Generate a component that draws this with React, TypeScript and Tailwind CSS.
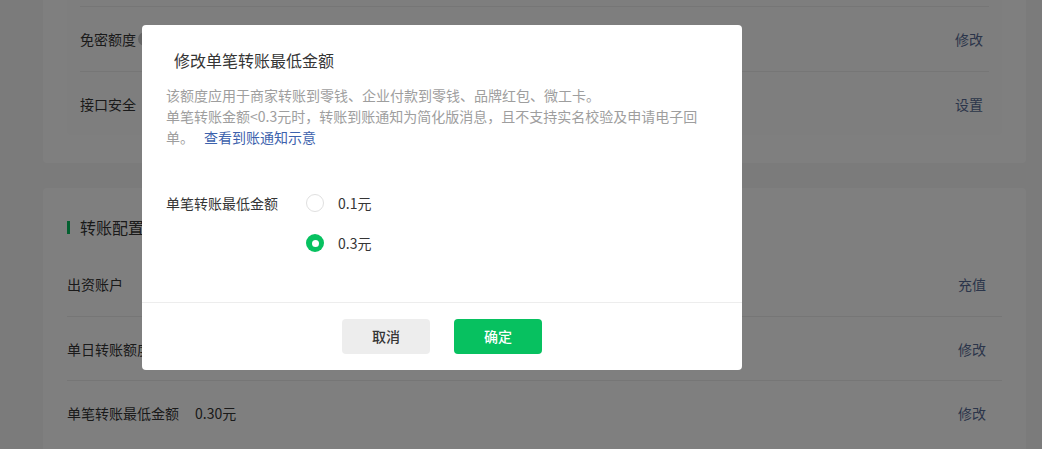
import React from 'react';

const font = { fontFamily: '"Noto Sans CJK SC", "Noto Sans", sans-serif' };

function Row({
  label,
  value,
  action,
  first,
  actionClass = 'mr-4',
}: {
  label: React.ReactNode;
  value?: string;
  action: string;
  first?: boolean;
  actionClass?: string;
}) {
  return (
    <div className={`flex items-center h-16 ${first ? '' : 'border-t border-[#ececec]'}`}>
      <div className="flex items-center text-[14px] leading-5 text-[#353535]">
        {label}
        {value && <span className="ml-[16px]">{value}</span>}
      </div>
      <span className={`ml-auto text-[14px] leading-5 text-[#576b95] ${actionClass}`}>{action}</span>
    </div>
  );
}

export default function App() {
  const [amount, setAmount] = React.useState<'0.1' | '0.3'>('0.3');

  return (
    <div className="relative h-[449px] w-[1042px] overflow-hidden bg-[#f7f7f7]" style={font}>
      {/* page behind the dialog */}
      <div className="px-[43px] pr-[16px]">
        <div className="-mt-[30px] rounded bg-white px-6 pt-6 pb-[28px]">
          <div className="rounded bg-[#fcfcfc] px-[13px] pt-3">
            <div className="h-0 border-t border-[#ececec]" />
            <Row
              first
              actionClass="mr-[6px]"
              label={
                <>
                  免密额度
                  <span className="ml-[2px] inline-flex h-[14px] w-[14px] items-center justify-center rounded-full bg-[#c8c8c8] text-[10px] text-white">
                    ?
                  </span>
                </>
              }
              action="修改"
            />
            <Row label="接口安全" action="设置" actionClass="mr-[6px]" />
          </div>
        </div>

        <div className="mt-[25px] rounded bg-white px-6 pt-6 pb-6">
          <div className="flex h-[30px] items-center mb-[10px]">
            <span className="h-[13px] w-[3px] bg-[#07c160]" />
            <span className="ml-[10px] text-[16px] leading-6 text-[#353535]">转账配置</span>
          </div>
          <Row first label="出资账户" action="充值" />
          <Row label="单日转账额度" action="修改" />
          <Row label="单笔转账最低金额" value="0.30元" action="修改" />
        </div>
      </div>

      {/* mask */}
      <div className="absolute inset-0 bg-black/50" />

      {/* dialog */}
      <div className="absolute left-[142px] top-[25px] w-[600px] rounded bg-white">
        <div className="pl-6 pr-10 pt-[23px]">
          <h3 className="pl-2 text-[16px] font-normal leading-6 text-[#353535]">修改单笔转账最低金额</h3>
          <p className="mt-[13px] text-[14px] leading-[21px] text-[#9e9e9e]">
            该额度应用于商家转账到零钱、企业付款到零钱、品牌红包、微工卡。
            <br />
            单笔转账金额&lt;0.3元时，转账到账通知为简化版消息，且不支持实名校验及申请电子回单。
            <a className="ml-[10px] text-[#3d62ad]" href="#">
              查看到账通知示意
            </a>
          </p>

          <div className="mt-[45px] flex pb-[49px]">
            <div className="w-[140px] text-[14px] leading-5 text-[#353535]">单笔转账最低金额</div>
            <div className="flex flex-col gap-5">
              {(['0.1', '0.3'] as const).map((v) => (
                <label key={v} className="flex h-5 cursor-pointer items-center" onClick={() => setAmount(v)}>
                  {amount === v ? (
                    <span className="flex h-[18px] w-[18px] items-center justify-center rounded-full bg-[#07c160]">
                      <span className="h-[7px] w-[7px] rounded-full bg-white" />
                    </span>
                  ) : (
                    <span className="h-[18px] w-[18px] rounded-full border border-[#e0e0e0] bg-white" />
                  )}
                  <span className="ml-[14px] text-[14px] leading-5 text-[#353535]">{v}元</span>
                </label>
              ))}
            </div>
          </div>
        </div>

        <div className="flex justify-center gap-6 border-t border-[#ededed] pt-4 pb-4">
          <button className="h-[35px] w-[88px] rounded bg-[#ededed] text-[14px] font-medium text-[#353535]">取消</button>
          <button className="h-[35px] w-[88px] rounded bg-[#07c160] text-[14px] font-medium text-white">确定</button>
        </div>
      </div>
    </div>
  );
}
